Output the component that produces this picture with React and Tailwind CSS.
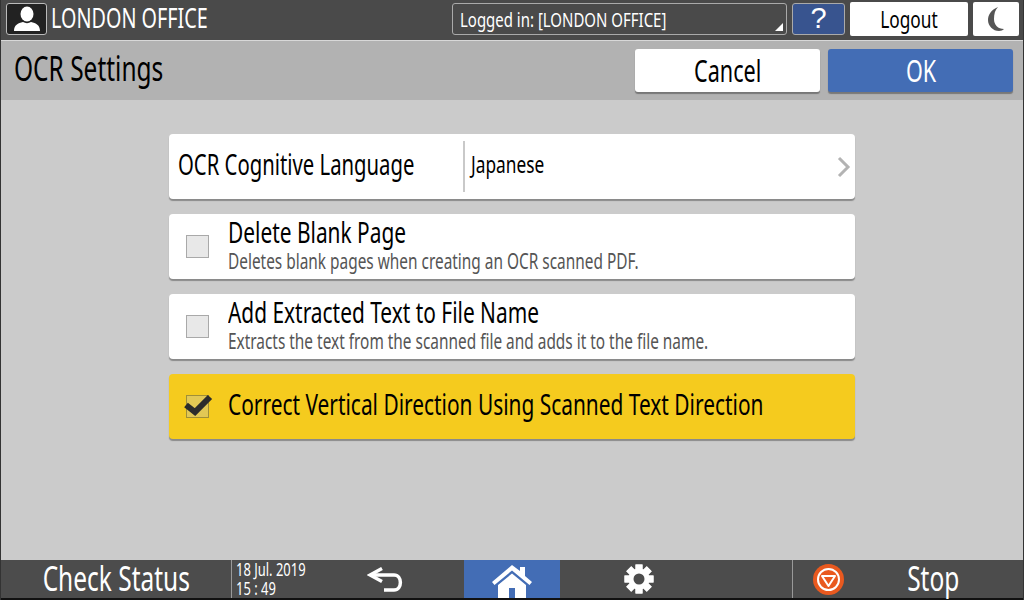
const font = "font-['Noto_Sans','Liberation_Sans',sans-serif]";

// The panel font is narrow, so regular Noto Sans gets squeezed horizontally
function Narrow({ className = "", center = false, children }) {
  return (
    <span className={`inline-block shrink-0 whitespace-nowrap scale-x-[0.72] ${center ? "origin-center" : "origin-left"} ${className}`}>
      {children}
    </span>
  );
}

function UserIcon() {
  return (
    <svg width="28" height="26" viewBox="0 0 28 26" fill="white">
      <ellipse cx="14" cy="8" rx="6.500" ry="7.500" />
      <path d="M1 25c0-6 4-8 9-9 2.500 1.500 5.500 1.500 8 0 5 1 9 3 9 9z" />
    </svg>
  );
}

function BackIcon() {
  return (
    <svg width="36" height="25" viewBox="0 0 36 25" fill="none" stroke="white" strokeWidth="3.500">
      <path d="M15 1.500 3 8l12 6.500" />
      <path d="M3 8h24c8.500 0 8.500 15 0 15H17" />
    </svg>
  );
}

function HomeIcon() {
  return (
    <svg width="40" height="33" viewBox="0 0 40 33" fill="white">
      <path d="M20 0 28 6V2h5v9l7 6-2.500 3L20 5.500 2.500 20 0 17z" />
      <path fillRule="evenodd" d="M6 20 20 8.500 34 20v13H6zM14 20v13h12V20z" />
      <path fillRule="evenodd" d="M14 20h12v13h-3V23h-6v10h-3z" />
    </svg>
  );
}

function GearIcon() {
  const teeth = [0, 45, 90, 135, 180, 225, 270, 315];
  return (
    <svg width="30" height="30" viewBox="0 0 30 30">
      {teeth.map((a) => (
        <rect key={a} x="11.500" y="0.500" width="7" height="29" fill="white" transform={`rotate(${a} 15 15)`} />
      ))}
      <circle cx="15" cy="15" r="10.500" fill="white" />
      <circle cx="15" cy="15" r="5.500" fill="#4c4c4c" />
    </svg>
  );
}

function StopIcon() {
  return (
    <svg width="31" height="31" viewBox="0 0 31 31">
      <circle cx="15.500" cy="15.500" r="15.500" fill="#e9591f" />
      <circle cx="15.500" cy="15.500" r="10.500" fill="none" stroke="white" strokeWidth="2" />
      <path d="M9 12h13l-6.500 10z" fill="none" stroke="white" strokeWidth="2" strokeLinejoin="round" />
    </svg>
  );
}

function MoonIcon() {
  return (
    <svg width="16" height="24" viewBox="0 0 16 24" fill="#555">
      <path d="M10 0C3 3 0 8 0 13c0 6 5 11 11 11 2 0 4-1 5-2-6 0-10-4-10-10 0-5 1-9 4-12z" />
    </svg>
  );
}

function CheckRow({ title, sub, checked }) {
  return (
    <div className={`flex h-[65px] w-[686px] items-center rounded-[4px] shadow-[0_2px_1px_#8a8a8a] ${checked ? "bg-[#f5cb1e]" : "bg-white"}`}>
      <div className={`relative ml-[17px] h-[23px] w-[23px] shrink-0 border ${checked ? "border-[#a08f38] bg-[#e2c855]" : "border-[#a9a9a9] bg-[#e8e8e8]"}`}>
        {checked && (
          <svg width="28" height="22" viewBox="0 0 28 22" fill="none" stroke="#2c2c2c" strokeWidth="6" className="absolute left-[-2px] top-[-1px] overflow-visible">
            <path d="M1 10l9 7 15-15" />
          </svg>
        )}
      </div>
      <div className={`ml-[19px] flex flex-col ${checked ? "pb-[7px]" : ""}`}>
        <Narrow className="text-[29px] leading-[27px] text-black">{title}</Narrow>
        {sub && <Narrow className="text-[21.400px] leading-[31px] text-[#555]">{sub}</Narrow>}
      </div>
    </div>
  );
}

export default function App() {
  return (
    <div className={`flex h-[600px] w-[1024px] flex-col overflow-hidden border-x border-[#333] bg-[#cbcbcb] ${font}`}>
      {/* top bar */}
      <header className="flex h-[41px] shrink-0 items-center border-b border-[#d8d8d8] bg-[#4a4a4a] pb-[2px]">
        <div className="ml-[5px] flex h-[32px] w-[41px] items-center justify-center rounded-[3px] border border-[#bbb] bg-[#222]">
          <UserIcon />
        </div>
        <div className="ml-[4px] w-[401px]">
          <Narrow className="text-[27.500px] leading-none text-white">LONDON OFFICE</Narrow>
        </div>
        <div className="relative h-[32px] w-[335px] rounded-[3px] border border-[#aaa] pl-[7px] text-[20.800px] leading-[30px] text-white">
          <Narrow>Logged in: [LONDON OFFICE]</Narrow>
          <div className="absolute bottom-[3px] right-[3px] h-0 w-0 border-b-[8px] border-l-[8px] border-b-white border-l-transparent" />
        </div>
        <div className="ml-[5px] flex h-[32px] w-[53px] items-center justify-center rounded-[3px] border border-[#aaa] bg-[#38548f] font-['Liberation_Sans',sans-serif] text-[29px] text-white">?</div>
        <div className="ml-[5px] flex h-[34px] w-[118px] items-center justify-center rounded-[2px] bg-white">
          <Narrow center className="text-[24px] text-black">Logout</Narrow>
        </div>
        <div className="ml-[5px] flex h-[34px] w-[46px] items-center justify-center rounded-[2px] bg-white">
          <MoonIcon />
        </div>
      </header>

      {/* title bar */}
      <div className="flex h-[59px] shrink-0 items-center bg-[#b2b2b2]">
        <div className="ml-[13px] w-[620px] pb-[3px]">
          <Narrow className="text-[34px] leading-none text-black">OCR Settings</Narrow>
        </div>
        <div className="ml-[1px] flex h-[43px] w-[185px] items-center justify-center rounded-[3px] bg-white pb-[1px] shadow-[0_2px_1px_#777]">
          <Narrow center className="text-[30px] text-black">Cancel</Narrow>
        </div>
        <div className="ml-[8px] flex h-[43px] w-[185px] items-center justify-center rounded-[3px] bg-[#436db5] pb-[1px] shadow-[0_2px_1px_#777]">
          <Narrow center className="text-[30px] text-white">OK</Narrow>
        </div>
      </div>

      {/* settings list */}
      <main className="flex flex-1 flex-col items-center gap-[15px] pr-[1px] pt-[34px]">
        <div className="flex h-[65px] w-[686px] items-center rounded-[4px] bg-white shadow-[0_2px_1px_#8a8a8a]">
          <div className="ml-[9px] w-[285px] pb-[4px]">
            <Narrow className="text-[28.200px] text-black">OCR Cognitive Language</Narrow>
          </div>
          <div className="h-[51px] w-[2px] bg-[#c9c9c9]" />
          <div className="ml-[6px] flex-1 pb-[6px]">
            <Narrow className="text-[24px] text-black">Japanese</Narrow>
          </div>
          <svg width="14" height="22" viewBox="0 0 14 22" fill="none" stroke="#b3b3b3" strokeWidth="3" className="mr-[4px]">
            <path d="M2 2l9 9-9 9" />
          </svg>
        </div>
        <CheckRow title="Delete Blank Page" sub="Deletes blank pages when creating an OCR scanned PDF." />
        <CheckRow title="Add Extracted Text to File Name" sub="Extracts the text from the scanned file and adds it to the file name." />
        <CheckRow title="Correct Vertical Direction Using Scanned Text Direction" checked />
      </main>

      {/* bottom bar */}
      <footer className="flex h-[40px] shrink-0 items-center border-b-2 border-[#111] bg-[#4c4c4c] text-white">
        <div className="flex h-full w-[231px] shrink-0 items-center justify-center border-r border-[#999] pb-[2px]">
          <Narrow center className="text-[34px] leading-none">Check Status</Narrow>
        </div>
        <div className="flex h-full w-[100px] shrink-0 flex-col justify-center pl-[4px] text-[18px] leading-[19px]">
          <Narrow>18 Jul. 2019</Narrow>
          <Narrow>15 : 49</Narrow>
        </div>
        <div className="flex w-[132px] shrink-0 items-center pl-[35px]"><BackIcon /></div>
        <div className="flex h-full w-[96px] shrink-0 items-end justify-center overflow-hidden bg-[#436db5]"><HomeIcon /></div>
        <div className="flex w-[232px] shrink-0 items-center pl-[64px]"><GearIcon /></div>
        <div className="flex h-full flex-1 items-center border-l border-[#999] pl-[20px]">
          <StopIcon />
          <div className="flex w-[178px] justify-center pb-[2px]">
            <Narrow center className="text-[34px] leading-none">Stop</Narrow>
          </div>
        </div>
      </footer>
    </div>
  );
}
